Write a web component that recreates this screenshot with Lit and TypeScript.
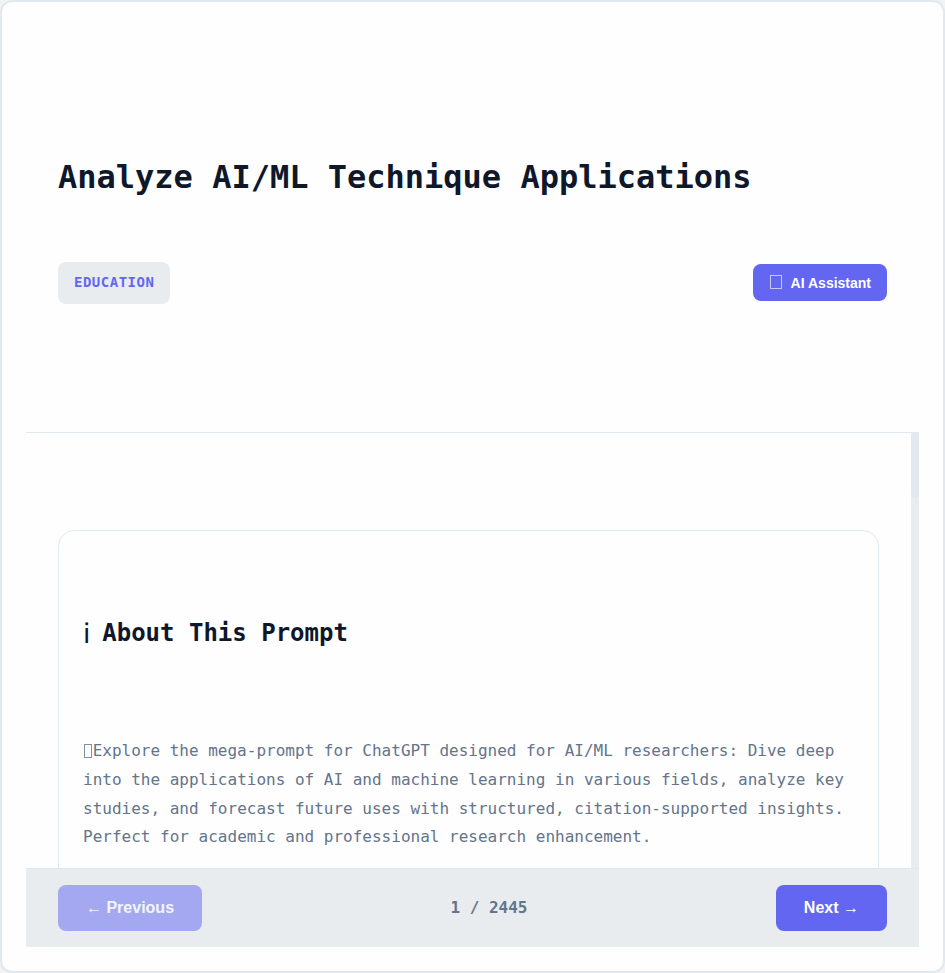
import { LitElement, html, css } from "lit";
import { customElement, property } from "lit/decorators.js";

@customElement("app-root")
export class AppRoot extends LitElement {
  @property({ type: Number }) page = 1;
  @property({ type: Number }) total = 2445;

  static styles = css`
    :host {
      display: block;
      height: 973px;
      background: #f1f3f5;
      font-family: "DejaVu Sans Mono", monospace;
      color: #0f172a;
    }
    * { box-sizing: border-box; }
    .modal {
      height: 973px;
      padding: 24px;
      display: flex;
      flex-direction: column;
      background: #fefefe;
      border: 2px solid #e2e8f0;
      border-radius: 12px;
      overflow: hidden;
    }
    .head {
      height: 407px;
      flex: none;
      padding: 0 32px;
      border-bottom: 1px solid #e2e8f0;
    }
    h1 {
      margin: 0;
      padding-top: 132px;
      font-size: 32px;
      line-height: 38px;
      font-weight: 700;
      white-space: nowrap;
    }
    .meta {
      margin-top: 66px;
      height: 42px;
      display: flex;
      align-items: center;
      justify-content: space-between;
    }
    .badge {
      height: 42px;
      padding: 0 16px;
      line-height: 41px;
      font-size: 14px;
      font-weight: 600;
      letter-spacing: 0.5px;
      color: #6366f1;
      background: #e8ecef;
      border-radius: 8px;
    }
    button {
      border: 0;
      margin: 0;
      border-radius: 8px;
      background: #6366f1;
      color: #fff;
      font-family: "Liberation Sans", Arial, sans-serif;
      font-weight: 600;
    }
    .assist {
      height: 37px;
      margin-bottom: 1px;
      padding: 0 16px;
      display: flex;
      align-items: center;
      gap: 8px;
      font-size: 14px;
      white-space: nowrap;
    }
    .glyph {
      width: 12px;
      height: 14px;
      margin: 0 1px 2px 1px;
      border: 1px solid rgba(255, 255, 255, 0.65);
    }
    .body {
      flex: 1;
      min-height: 0;
      display: flex;
      overflow: hidden;
    }
    .view {
      flex: 1;
      min-width: 0;
      padding: 97px 32px 0;
      overflow: hidden;
    }
    .about {
      height: 500px;
      padding: 0 24px;
      border: 1px solid #e2e8f0;
      border-radius: 16px;
    }
    h2 {
      margin: 0;
      padding-top: 88px;
      height: 117px;
      display: flex;
      gap: 12px;
      font-size: 24px;
      line-height: 29px;
      font-weight: 700;
    }
    .info {
      font-family: "Noto Sans", sans-serif;
      font-size: 28px;
      line-height: 27px;
      font-weight: 400;
    }
    p {
      margin: 89px 0 0;
      font-size: 16px;
      line-height: 28.8px;
      color: #64748b;
    }
    .mark {
      display: inline-block;
      width: 8px;
      height: 14px;
      margin: 0 0.63px 0 1px;
      vertical-align: -2px;
      border: 1px solid #8290a3;
    }
    .track { width: 8px; flex: none; background: #e8ecef; }
    .thumb { height: 65px; background: #e2e8f0; border-radius: 4px; }
    .foot {
      height: 79px;
      flex: none;
      padding: 0 32px;
      display: flex;
      align-items: center;
      justify-content: space-between;
      background: #e8ecef;
      border-top: 1px solid #e2e8f0;
    }
    .nav { height: 46px; padding: 0 28px; font-size: 16px; }
    .nav[disabled] { opacity: 0.5; }
    .count { font-size: 16px; font-weight: 600; color: #64748b; padding-bottom: 2px; }
  `;

  render() {
    return html`
      <div class="modal">
        <div class="head">
          <h1>Analyze AI/ML Technique Applications</h1>
          <div class="meta">
            <span class="badge">EDUCATION</span>
            <button class="assist"><span class="glyph"></span><span>AI Assistant</span></button>
          </div>
        </div>
        <div class="body">
          <div class="view">
            <section class="about">
              <h2><span class="info">ℹ</span><span>About This Prompt</span></h2>
              <p><span class="mark"></span>Explore the mega-prompt for ChatGPT designed for AI/ML researchers: Dive deep into the applications of AI and machine learning in various fields, analyze key studies, and forecast future uses with structured, citation-supported insights. Perfect for academic and professional research enhancement.</p>
            </section>
          </div>
          <div class="track"><div class="thumb"></div></div>
        </div>
        <div class="foot">
          <button class="nav" ?disabled=${this.page === 1}>← Previous</button>
          <span class="count">${this.page} / ${this.total}</span>
          <button class="nav">Next →</button>
        </div>
      </div>
    `;
  }
}
